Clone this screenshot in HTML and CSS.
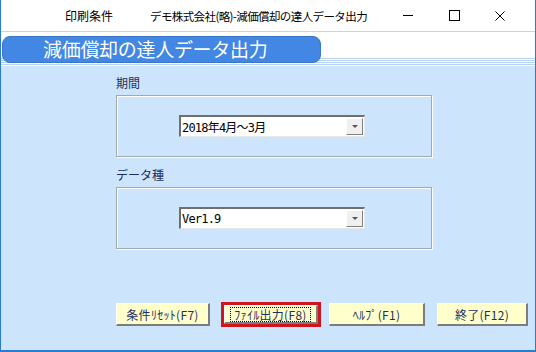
FILE: index.html
```html
<!DOCTYPE html>
<html lang="ja">
<head>
  <meta charset="UTF-8" />
  <title>減価償却の達人データ出力</title>
  <link rel="stylesheet" href="styles.css">
</head>
<body>
  <div class="window">
    <header class="titlebar">
      <span class="menu">印刷条件</span>
      <span class="caption">デモ株式会社(略)-減価償却の達人データ出力</span>
      <div class="controls">
        <span class="ctl min"></span>
        <span class="ctl max"></span>
        <span class="ctl close">
          <svg width="10" height="10" viewBox="0 0 10 10"><path d="M0.5 0.5 L9.5 9.5 M9.5 0.5 L0.5 9.5" stroke="#000" stroke-width="1" fill="none"/></svg>
        </span>
      </div>
    </header>

    <div class="banner">
      <div class="pill">減価償却の達人データ出力</div>
    </div>

    <main class="content">
      <div class="label">期間</div>
      <div class="group">
        <div class="combo">
          <span class="value">2018年4月～3月</span>
          <span class="drop"></span>
        </div>
      </div>

      <div class="label">データ種</div>
      <div class="group">
        <div class="combo">
          <span class="value">Ver1.9</span>
          <span class="drop"></span>
        </div>
      </div>

      <div class="buttons">
        <button class="btn b1">条件ﾘｾｯﾄ(F7)</button>
        <div class="focus-ring"><button class="btn b2"><span class="dots">ﾌｧｲﾙ出力(F8)</span></button></div>
        <button class="btn b3">ﾍﾙﾌﾟ(F1)</button>
        <button class="btn b4">終了(F12)</button>
      </div>
    </main>
  </div>
</body>
</html>
```

FILE: styles.css
```css
:root {
  --frame: #2b7bd0;
  --bg: #cce4fc;
  --navy: #1c2f5e;
  --pill: #4287e4;
  --btn: #ffffcc;
}
* {
  box-sizing: border-box;
}
body {
  margin: 0;
  font-family: "Noto Sans CJK JP", "Noto Sans", sans-serif;
  font-size: 12px;
}
.window {
  width: 536px;
  height: 352px;
  border-left: 1px solid var(--frame);
  border-right: 1px solid var(--frame);
  border-bottom: 2px solid var(--frame);
  display: flex;
  flex-direction: column;
  background: #fff;
}
.titlebar {
  height: 32px;
  display: flex;
  align-items: center;
  border-bottom: 1px solid #b9d6f2;
  color: #000;
  white-space: nowrap;
}
.menu {
  margin-left: 64px;
  width: 85px;
}
.caption {
  font-size: 11.5px;
  letter-spacing: -0.6px;
}
.controls {
  margin-left: auto;
  display: flex;
  align-items: center;
}
.ctl {
  width: 46px;
  height: 30px;
  display: flex;
  align-items: center;
  justify-content: center;
}
.min::before {
  content: "";
  width: 10px;
  height: 1px;
  background: #000;
}
.max::before {
  content: "";
  width: 9px;
  height: 9px;
  border: 1px solid #000;
}
.close {
  margin-right: 12px;
}
.banner {
  height: 34px;
  padding: 4px 0 0 1px;
  background:
    repeating-linear-gradient(to bottom, #ffffff 0, #ffffff 1px, #b8d4f4 1px, #b8d4f4 2px) bottom / 100% 9px no-repeat,
    #fff;
}
.pill {
  width: 319px;
  height: 27px;
  background: var(--pill);
  border: 1px solid #3a75c8;
  border-radius: 8px;
  color: #fff;
  font-size: 19px;
  line-height: 24px;
  padding-left: 40px;
  letter-spacing: -0.3px;
}
.content {
  flex: 1;
  background: var(--bg);
  padding: 9px 0 0 115px;
}
.label {
  color: var(--navy);
  line-height: 16px;
  margin-bottom: 4px;
}
.label + .group {
  margin-bottom: 10px;
}
.group {
  width: 316px;
  height: 62px;
  border: 1px solid #a0a8b0;
  box-shadow: inset 1px 1px 0 #fff, 1px 1px 0 #fff;
  padding: 19px 0 0 62px;
}
.combo {
  width: 186px;
  height: 22px;
  background: #fff;
  border-top: 2px solid #6f6f6f;
  border-left: 2px solid #6f6f6f;
  border-bottom: 1px solid #e8e8e8;
  border-right: 1px solid #e8e8e8;
  display: flex;
  align-items: center;
}
.value {
  flex: 1;
  padding-left: 1px;
  font-family: "DejaVu Sans Mono", "Noto Sans CJK JP", monospace;
  font-size: 12px;
  letter-spacing: -0.8px;
  color: #000;
}
.drop {
  width: 17px;
  height: 17px;
  margin-right: 1px;
  background: #f0f0f0;
  border-top: 1px solid #fff;
  border-left: 1px solid #fff;
  border-right: 1px solid #808080;
  border-bottom: 1px solid #808080;
  position: relative;
}
.drop::after {
  content: "";
  position: absolute;
  left: 5px;
  top: 6px;
  border-left: 3px solid transparent;
  border-right: 3px solid transparent;
  border-top: 3px solid #555;
}
.buttons {
  display: flex;
  align-items: center;
  margin-top: 53px;
}
.btn {
  height: 23px;
  background: var(--btn);
  border: none;
  border-top: 1px solid #fff;
  border-left: 1px solid #fff;
  border-right: 2px solid #7c7c7c;
  border-bottom: 2px solid #7c7c7c;
  font-family: "Noto Sans CJK JP", sans-serif;
  font-size: 12px;
  color: var(--navy);
  padding: 0;
  letter-spacing: 0.3px;
}
.b1 {
  width: 94px;
}
.focus-ring {
  margin-left: 11px;
  border: 3px solid #d0141c;
  padding: 0;
  display: flex;
}
.b2 {
  width: 94px;
  height: 19px;
  display: flex;
  align-items: center;
  justify-content: center;
}
.dots {
  border: 1px dotted #000;
  padding: 0 3px;
  line-height: 13px;
}
.b3 {
  width: 96px;
  margin-left: 8px;
}
.b4 {
  width: 91px;
  margin-left: 12px;
}
```
